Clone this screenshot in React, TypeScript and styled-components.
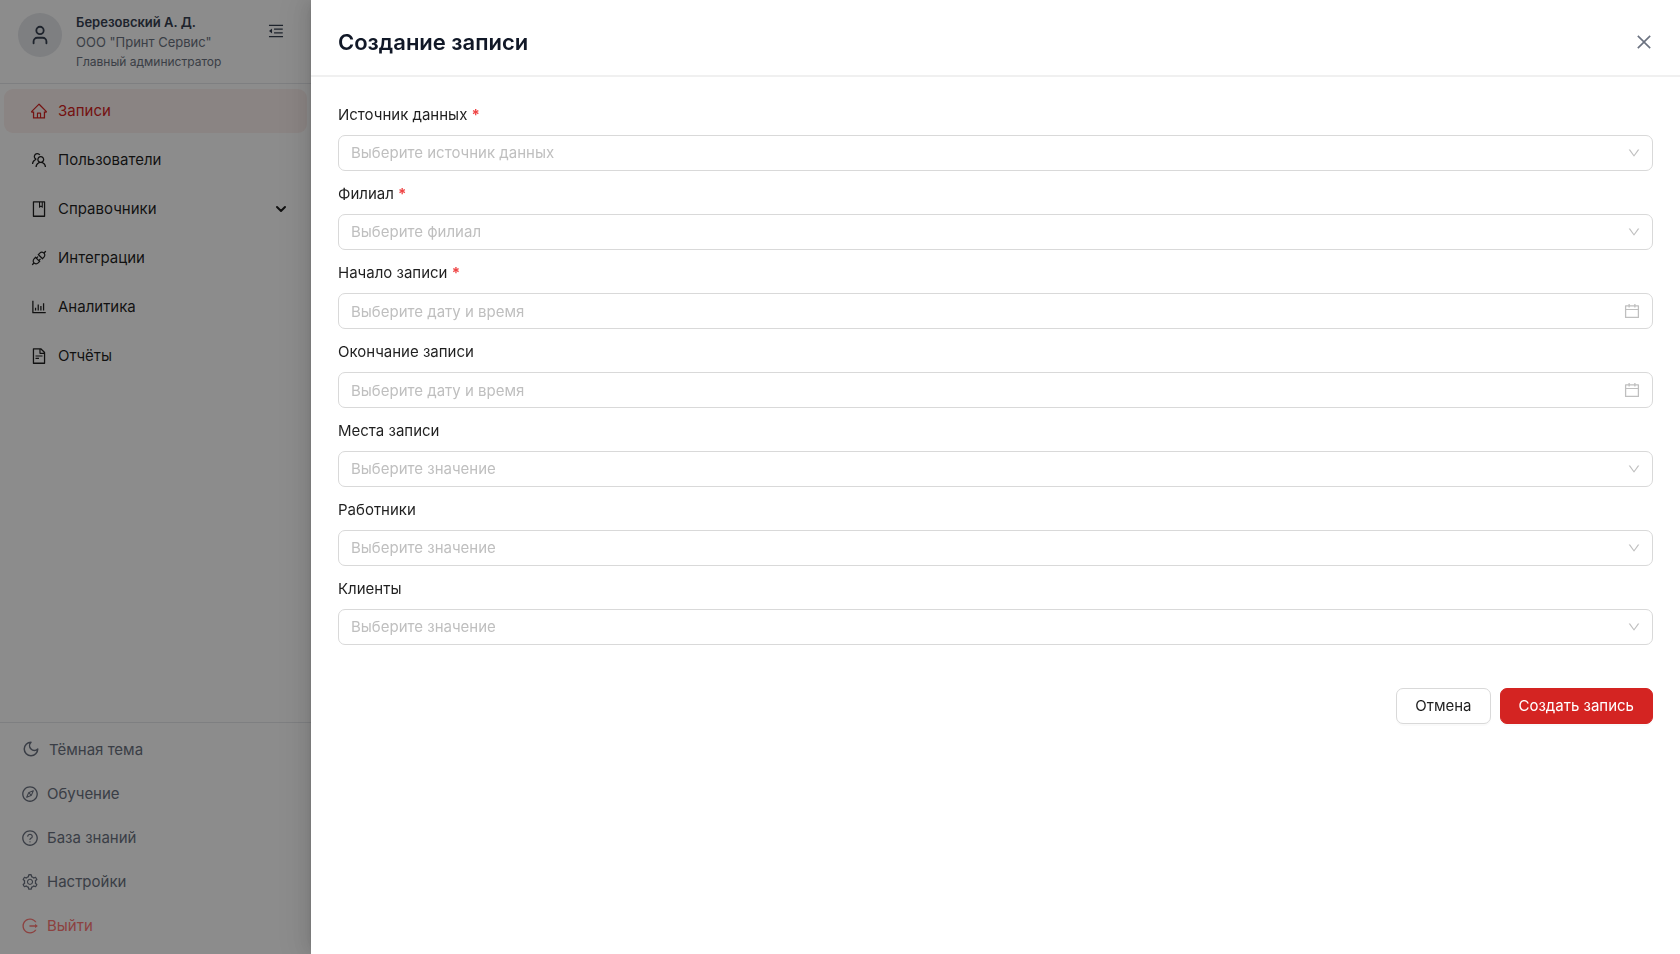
import React from "react";
import styled, { createGlobalStyle, css } from "styled-components";
import {
  AiOutlineApi,
  AiOutlineBarChart,
  AiOutlineBook,
  AiOutlineCalendar,
  AiOutlineClose,
  AiOutlineCompass,
  AiOutlineDown,
  AiOutlineFileText,
  AiOutlineHome,
  AiOutlineLogout,
  AiOutlineMenuFold,
  AiOutlineQuestionCircle,
  AiOutlineSetting,
  AiOutlineTeam,
} from "react-icons/ai";
import { ChevronDown, User } from "lucide-react";

const SIDEBAR_WIDTH = "311px";

const GlobalStyle = createGlobalStyle`
  *, *::before, *::after { box-sizing: border-box; }
  body {
    margin: 0;
    background: #ffffff;
    color: rgba(0, 0, 0, 0.88);
    font-family: Inter, "Liberation Sans", sans-serif;
    font-size: 15px;
    line-height: 24px;
  }
  button, input, select { font: inherit; }
`;

const Page = styled.div`
  display: flex;
  min-height: 100vh;
`;

const Sidebar = styled.aside`
  display: flex;
  flex-direction: column;
  width: ${SIDEBAR_WIDTH};
  background: #ffffff;
`;

const Profile = styled.header`
  display: flex;
  align-items: flex-start;
  gap: 14px;
  padding: 12px 26px 11px 18px;
  border-bottom: 1px solid #e5e7eb;
`;

const Avatar = styled.div`
  display: flex;
  align-items: center;
  justify-content: center;
  width: 44px;
  height: 44px;
  margin-top: 1px;
  border-radius: 50%;
  background: #e5e7eb;
  color: #374151;
`;

const ProfileText = styled.div`
  flex: 1;
  color: #6b7280;
  font-size: 13px;
  line-height: 20px;
`;

const UserName = styled.div`
  color: #374151;
  font-weight: 600;
`;

const Role = styled.div`
  font-size: 12px;
`;

const IconButton = styled.button`
  display: flex;
  padding: 0;
  border: 0;
  background: none;
  color: #374151;
  cursor: pointer;
`;

const FoldButton = styled(IconButton)`
  margin-top: 10px;
`;

const Menu = styled.nav`
  display: flex;
  flex: 1;
  flex-direction: column;
  gap: 5px;
  padding: 5px 4px;
`;

const MenuLink = styled.a<{ $active?: boolean }>`
  display: flex;
  align-items: center;
  gap: 10px;
  height: 44px;
  padding: 0 18px 0 26px;
  border-radius: 9px;
  color: rgba(0, 0, 0, 0.88);
  text-decoration: none;

  ${(p) =>
    p.$active &&
    css`
      background: #fcf0ee;
      color: #d42422;
    `}
`;

const MenuLabel = styled.span`
  flex: 1;
`;

const FooterMenu = styled.nav`
  padding: 5px 0 6px;
  border-top: 1px solid #e5e7eb;
`;

const FooterLink = styled.a<{ $danger?: boolean; $roomy?: boolean }>`
  display: flex;
  align-items: center;
  gap: ${(p) => (p.$roomy ? "9px" : "8px")};
  height: 44px;
  padding: 0 ${(p) => (p.$roomy ? "22px" : "21px")};
  color: ${(p) => (p.$danger ? "#ff7875" : "#6b7280")};
  text-decoration: none;

  svg { margin-bottom: ${(p) => (p.$roomy ? "3px" : "0")}; }
`;

const Mask = styled.div`
  position: fixed;
  inset: 0;
  background: rgba(0, 0, 0, 0.45);
`;

const Drawer = styled.section`
  position: fixed;
  inset: 0 0 0 ${SIDEBAR_WIDTH};
  display: flex;
  flex-direction: column;
  overflow: auto;
  background: #ffffff;
  box-shadow:
    -6px 0 16px 0 rgba(0, 0, 0, 0.08),
    -3px 0 6px -4px rgba(0, 0, 0, 0.12),
    -9px 0 28px 8px rgba(0, 0, 0, 0.05);
`;

const DrawerHeader = styled.header`
  display: flex;
  align-items: center;
  justify-content: space-between;
  padding: 26px 26px 17px 27px;
  border-bottom: 2px solid #f0f0f0;
`;

const Title = styled.h2`
  margin: 0;
  color: #111827;
  font-size: 22px;
  font-weight: 600;
  line-height: 32px;
`;

const CloseButton = styled(IconButton)`
  color: #6b7280;
`;

const Form = styled.form`
  display: flex;
  flex-direction: column;
  gap: 11px;
  padding: 26px 27px;
`;

const Field = styled.div`
  display: flex;
  flex-direction: column;
  gap: 8px;
`;

const Label = styled.label`
  color: rgba(0, 0, 0, 0.88);
`;

const Required = styled.span`
  color: #ef4444;
  font-weight: 700;
`;

const Control = styled.div`
  display: grid;
  align-items: center;

  > * { grid-area: 1 / 1; }
  > svg {
    justify-self: end;
    margin-right: 12px;
    color: #bfbfbf;
    pointer-events: none;
  }
`;

const controlStyle = css`
  width: 100%;
  height: 36px;
  padding: 0 12px;
  border: 1px solid #d9d9d9;
  border-radius: 7px;
  background: #ffffff;
  color: #bfbfbf;
  appearance: none;
  outline: none;
`;

const Select = styled.select`
  ${controlStyle}
`;

const DateInput = styled.input`
  ${controlStyle}
  &::placeholder { color: #bfbfbf; opacity: 1; }
`;

const Actions = styled.div`
  display: flex;
  justify-content: flex-end;
  gap: 9px;
  margin-top: 32px;
`;

const Button = styled.button<{ $primary?: boolean }>`
  height: 36px;
  padding: 0 18px;
  border: 1px solid ${(p) => (p.$primary ? "#d42422" : "#d9d9d9")};
  border-radius: 7px;
  background: ${(p) => (p.$primary ? "#d42422" : "#ffffff")};
  color: ${(p) => (p.$primary ? "#ffffff" : "rgba(0, 0, 0, 0.88)")};
  box-shadow: 0 2px 0 rgba(0, 0, 0, 0.02);
  cursor: pointer;
`;

const MoonIcon = () => (
  <svg width="18" height="18" viewBox="0 0 24 24" fill="none" stroke="currentColor" strokeWidth="2" strokeLinecap="round" strokeLinejoin="round">
    <path d="M12 3a6 6 0 0 0 9 9 9 9 0 1 1-9-9Z" />
  </svg>
);

const menu = [
  { label: "Записи", Icon: AiOutlineHome, active: true },
  { label: "Пользователи", Icon: AiOutlineTeam },
  { label: "Справочники", Icon: AiOutlineBook, expandable: true },
  { label: "Интеграции", Icon: AiOutlineApi },
  { label: "Аналитика", Icon: AiOutlineBarChart },
  { label: "Отчёты", Icon: AiOutlineFileText },
];

const footerMenu = [
  { label: "Тёмная тема", icon: <MoonIcon />, roomy: true },
  { label: "Обучение", icon: <AiOutlineCompass size={18} /> },
  { label: "База знаний", icon: <AiOutlineQuestionCircle size={18} /> },
  { label: "Настройки", icon: <AiOutlineSetting size={18} /> },
  { label: "Выйти", icon: <AiOutlineLogout size={18} />, danger: true },
];

const fields = [
  { id: "source", label: "Источник данных", hint: "Выберите источник данных", required: true },
  { id: "branch", label: "Филиал", hint: "Выберите филиал", required: true },
  { id: "start", label: "Начало записи", hint: "Выберите дату и время", required: true, date: true },
  { id: "end", label: "Окончание записи", hint: "Выберите дату и время", date: true },
  { id: "places", label: "Места записи", hint: "Выберите значение" },
  { id: "workers", label: "Работники", hint: "Выберите значение" },
  { id: "clients", label: "Клиенты", hint: "Выберите значение" },
];

export default function App() {
  return (
    <>
      <GlobalStyle />
      <Page>
        <Sidebar>
          <Profile>
            <Avatar>
              <User size={22} />
            </Avatar>
            <ProfileText>
              <UserName>Березовский А. Д.</UserName>
              <div>ООО "Принт Сервис"</div>
              <Role>Главный администратор</Role>
            </ProfileText>
            <FoldButton type="button" aria-label="Свернуть меню">
              <AiOutlineMenuFold size={18} />
            </FoldButton>
          </Profile>
          <Menu>
            {menu.map(({ label, Icon, active, expandable }) => (
              <MenuLink key={label} href="#" $active={active}>
                <Icon size={18} />
                <MenuLabel>{label}</MenuLabel>
                {expandable && <ChevronDown size={16} strokeWidth={3} />}
              </MenuLink>
            ))}
          </Menu>
          <FooterMenu>
            {footerMenu.map((item) => (
              <FooterLink key={item.label} href="#" $danger={item.danger} $roomy={item.roomy}>
                {item.icon}
                <span>{item.label}</span>
              </FooterLink>
            ))}
          </FooterMenu>
        </Sidebar>
      </Page>
      <Mask />
      <Drawer role="dialog" aria-labelledby="drawer-title">
        <DrawerHeader>
          <Title id="drawer-title">Создание записи</Title>
          <CloseButton type="button" aria-label="Закрыть">
            <AiOutlineClose size={20} />
          </CloseButton>
        </DrawerHeader>
        <Form>
          {fields.map((field) => (
            <Field key={field.id}>
              <Label htmlFor={field.id}>
                {field.label} {field.required && <Required>*</Required>}
              </Label>
              <Control>
                {field.date ? (
                  <>
                    <DateInput id={field.id} type="text" placeholder={field.hint} />
                    <AiOutlineCalendar size={18} />
                  </>
                ) : (
                  <>
                    <Select id={field.id} defaultValue="">
                      <option value="">{field.hint}</option>
                    </Select>
                    <AiOutlineDown size={14} />
                  </>
                )}
              </Control>
            </Field>
          ))}
          <Actions>
            <Button type="button">Отмена</Button>
            <Button type="submit" $primary>
              Создать запись
            </Button>
          </Actions>
        </Form>
      </Drawer>
    </>
  );
}
